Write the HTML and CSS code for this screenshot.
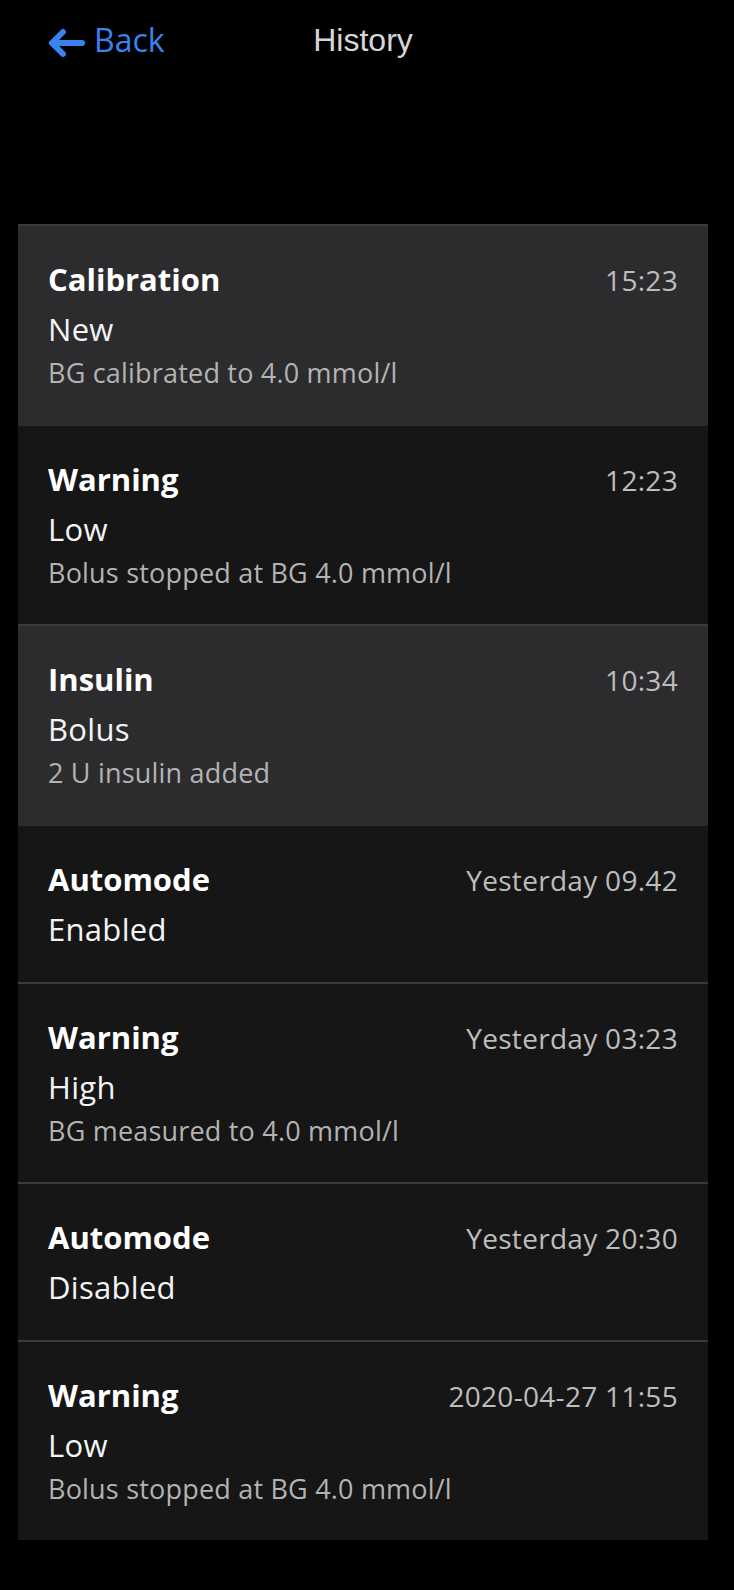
FILE: index.html
```html
<!DOCTYPE html>
<html lang="en">
<head>
<meta charset="utf-8">
<title>History</title>
<link rel="stylesheet" href="styles.css">
</head>
<body>
<header class="header">
  <nav class="nav">
    <a class="back" href="#">
      <svg class="back-icon" width="38" height="30" viewBox="0 0 38 30" aria-hidden="true">
        <path d="M34 15H4M15 4L4 15L15 26" fill="none" stroke="#3a82ee" stroke-width="6" stroke-linecap="round" stroke-linejoin="round"/>
      </svg>
      <span>Back</span>
    </a>
    <h1 class="title">History</h1>
    <span></span>
  </nav>
</header>
<main class="list">
  <section class="item unread">
    <div class="row"><span class="name">Calibration</span><span class="time">15:23</span></div>
    <div class="sub">New</div>
    <div class="desc">BG calibrated to 4.0 mmol/l</div>
  </section>
  <section class="item">
    <div class="row"><span class="name">Warning</span><span class="time">12:23</span></div>
    <div class="sub">Low</div>
    <div class="desc">Bolus stopped at BG 4.0 mmol/l</div>
  </section>
  <section class="item unread">
    <div class="row"><span class="name">Insulin</span><span class="time">10:34</span></div>
    <div class="sub">Bolus</div>
    <div class="desc">2 U insulin added</div>
  </section>
  <section class="item">
    <div class="row"><span class="name">Automode</span><span class="time">Yesterday 09.42</span></div>
    <div class="sub">Enabled</div>
  </section>
  <section class="item">
    <div class="row"><span class="name">Warning</span><span class="time">Yesterday 03:23</span></div>
    <div class="sub">High</div>
    <div class="desc">BG measured to 4.0 mmol/l</div>
  </section>
  <section class="item">
    <div class="row"><span class="name">Automode</span><span class="time">Yesterday 20:30</span></div>
    <div class="sub">Disabled</div>
  </section>
  <section class="item">
    <div class="row"><span class="name">Warning</span><span class="time">2020-04-27 11:55</span></div>
    <div class="sub">Low</div>
    <div class="desc">Bolus stopped at BG 4.0 mmol/l</div>
  </section>
</main>
</body>
</html>
```
FILE: styles.css
```css
html, body {
  margin: 0;
  padding: 0;
  background: #000;
}

body {
  font-family: "Open Sans", "Liberation Sans", sans-serif;
  color: #fff;
  width: 734px;
}

.header {
  padding: 20px 26px 164px 18px;
}

.nav {
  display: grid;
  grid-template-columns: 1fr auto 1fr;
  align-items: center;
  height: 40px;
}

.back {
  display: flex;
  align-items: center;
  padding-left: 30px;
  color: #3a82ee;
  text-decoration: none;
  font-size: 32px;
  line-height: 40px;
  justify-self: start;
}

.back-icon {
  margin-top: 6px;
  margin-right: 8px;
  flex: none;
}

.title {
  margin: 0;
  font-family: "Liberation Sans", Arial, sans-serif;
  font-weight: 400;
  font-size: 32px;
  line-height: 40px;
  color: #d6d6d6;
}

.list {
  margin: 0 26px 0 18px;
}

.item {
  background: #161616;
  border-top: 2px solid #3a3a3c;
  padding: 33px 30px 31px 30px;
}

.item.unread {
  background: #2c2c2e;
}

.item.unread + .item {
  border-top-color: #2c2c2e;
}

.row {
  display: flex;
  justify-content: space-between;
  align-items: baseline;
  height: 40px;
}

.name {
  font-weight: 700;
  font-size: 31px;
  line-height: 40px;
  color: #fff;
}

.time {
  font-size: 28px;
  letter-spacing: 0.3px;
  line-height: 40px;
  color: #bdbdbd;
}

.sub {
  margin-top: 8px;
  font-size: 31px;
  letter-spacing: 0.3px;
  line-height: 44px;
  color: #f4f4f4;
}

.desc {
  margin-top: 2px;
  font-size: 27px;
  letter-spacing: 0.2px;
  line-height: 40px;
  color: #b3b3b3;
}
```
